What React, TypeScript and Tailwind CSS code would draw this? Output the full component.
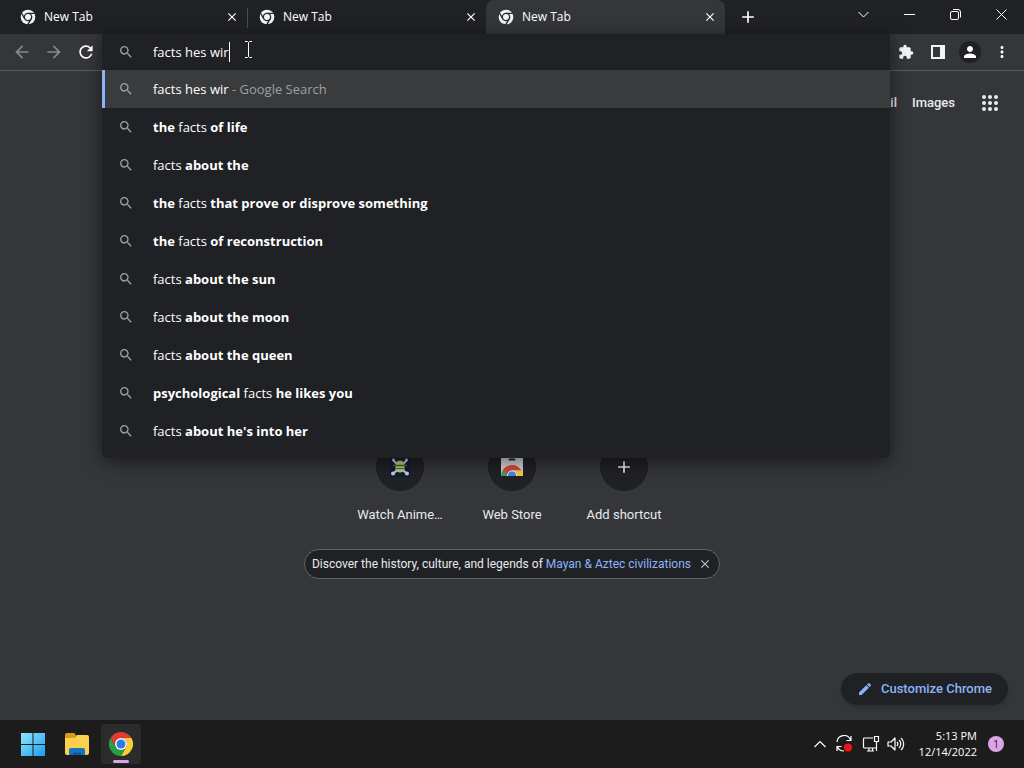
import React, { useState } from "react";
import { MdArrowBack, MdArrowForward, MdRefresh, MdSearch, MdExtension, MdPerson, MdMoreVert, MdClose, MdAdd, MdEdit } from "react-icons/md";

interface IPart {
  text: string;
  bold?: boolean;
}

const tabs = [
  { id: 1, title: "New Tab" },
  { id: 2, title: "New Tab" },
  { id: 3, title: "New Tab" },
];

const suggestions: IPart[][] = [
  [{ text: "the", bold: true }, { text: " facts " }, { text: "of life", bold: true }],
  [{ text: "facts " }, { text: "about the", bold: true }],
  [{ text: "the", bold: true }, { text: " facts " }, { text: "that prove or disprove something", bold: true }],
  [{ text: "the", bold: true }, { text: " facts " }, { text: "of reconstruction", bold: true }],
  [{ text: "facts " }, { text: "about the sun", bold: true }],
  [{ text: "facts " }, { text: "about the moon", bold: true }],
  [{ text: "facts " }, { text: "about the queen", bold: true }],
  [{ text: "psychological", bold: true }, { text: " facts " }, { text: "he likes you", bold: true }],
  [{ text: "facts " }, { text: "about he's into her", bold: true }],
];

const ChromeMono = () => (
  <svg viewBox="0 0 48 48" className="h-4 w-4 shrink-0">
    <circle cx="24" cy="24" r="22" fill="#f1f3f4" />
    <g stroke="#2a2b2e" strokeWidth="4" fill="none">
      <circle cx="24" cy="24" r="11" />
      <path d="M24 13H46M33.5 29.5 22.5 48.5M14.5 29.5 3.5 10.5" />
    </g>
  </svg>
);

const ChromeColor = () => (
  <svg viewBox="0 0 48 48" className="h-6 w-6">
    <path d="M3.2 12A24 24 0 0 1 44.8 12H24A12 12 0 0 0 13.6 30Z" fill="#e33b2e" />
    <path d="M44.8 12A24 24 0 0 1 24 48L34.4 30A12 12 0 0 0 24 12Z" fill="#fccc32" />
    <path d="M24 48A24 24 0 0 1 3.2 12L13.6 30A12 12 0 0 0 34.4 30Z" fill="#2a9d48" />
    <circle cx="24" cy="24" r="12" fill="#fff" />
    <circle cx="24" cy="24" r="9" fill="#2f78e6" />
  </svg>
);

const SkullIcon = () => (
  <svg viewBox="0 0 20 20" className="h-5 w-5">
    <rect width="20" height="20" fill="#141c33" />
    <path d="M4 4 16 16M16 4 4 16" stroke="#c3cbea" strokeWidth="2" />
    <g fill="#c3cbea">
      <circle cx="3.500" cy="3" r="1.500" />
      <circle cx="16.500" cy="3" r="1.500" />
      <circle cx="3" cy="16.500" r="2" />
      <circle cx="17" cy="16.500" r="2" />
    </g>
    <path d="M5.500 8a4.500 4.500 0 0 1 9 0v3.500a4.500 4 0 0 1-9 0Z" fill="#b5c872" />
    <path d="M3 8.500h14" stroke="#4a5a3a" strokeWidth="1.500" />
    <path d="M6.500 11.500h7" stroke="#4a5a3a" />
  </svg>
);

const WebStoreIcon = () => (
  <svg viewBox="0 0 24 24" className="h-6 w-6">
    <defs>
      <clipPath id="bag">
        <path d="M1 2h22v19H1Z" />
      </clipPath>
    </defs>
    <path d="M1 2h22v19H1Z" fill="#d0d2d3" />
    <path d="M9.500 4.500h5" stroke="#202124" strokeWidth="2" strokeLinecap="round" />
    <g clipPath="url(#bag)">
      <path d="M12 21 2.500 15.500A11 11 0 0 0 1 21l3 1h8Z" fill="#34a163" />
      <path d="M2.500 15.500a11 11 0 0 1 19 0H12L7 19Z" fill="#d9453c" />
      <path d="M12 15.500h9.500a11 11 0 0 1 1.500 6.500H12Z" fill="#fbc93d" />
      <circle cx="12" cy="20.500" r="5" fill="#e8eaed" />
      <circle cx="12" cy="20.500" r="4" fill="#4285f4" />
    </g>
  </svg>
);

const WindowsIcon = () => (
  <svg viewBox="0 0 24 24" className="h-6 w-6">
    <defs>
      <linearGradient id="win" x1="0" y1="0" x2="1" y2="1">
        <stop offset="0" stopColor="#8fe6fb" />
        <stop offset="1" stopColor="#1d9df0" />
      </linearGradient>
    </defs>
    <path d="M0 1h11.500v11H0ZM12.500 1H24v11H12.500ZM0 13h11.500v11H0ZM12.500 13H24v11H12.500Z" fill="url(#win)" />
  </svg>
);

const FolderIcon = () => (
  <svg viewBox="0 0 26 24" className="h-6 w-[26px]">
    <path d="M1 3a2 2 0 0 1 2-2h7l2 2-2 4H1Z" fill="#d99b1c" />
    <path d="M1 6h9l3-3h10a2 2 0 0 1 2 2v16a2 2 0 0 1-2 2H3a2 2 0 0 1-2-2Z" fill="#fbd04e" />
    <path d="M5 23v-5a2 2 0 0 1 2-2h12a2 2 0 0 1 2 2v5Z" fill="#1673c4" />
    <path d="M9 23v-2.500h8V23Z" fill="#0e559c" />
  </svg>
);

const AppsIcon = () => (
  <svg viewBox="0 0 16 16" className="h-4 w-4" fill="#e8eaed">
    {[2, 8, 14].map((y) => [2, 8, 14].map((x) => <circle key={`${x}-${y}`} cx={x} cy={y} r="2" />))}
  </svg>
);

const WindowControls = () => {
  const controls = [
    { label: "Search tabs", d: "M0.500 3 5.500 8 10.500 3" },
    { label: "Minimize", d: "M0 5.500H11" },
    { label: "Restore", d: "M0.500 4a1.500 1.500 0 0 1 1.500-1.500H7A1.500 1.500 0 0 1 8.500 4V9A1.500 1.500 0 0 1 7 10.500H2A1.500 1.500 0 0 1 0.500 9ZM3 0.500H8A2.500 2.500 0 0 1 10.500 3V8.500" },
    { label: "Close", d: "M0.500 0.500 10.500 10.500M10.500 0.500 0.500 10.500" },
  ];
  return (
    <div className="ml-auto flex h-7">
      {controls.map((control) => (
        <button key={control.label} aria-label={control.label} className="flex w-[46px] items-center justify-center">
          <svg viewBox="0 0 11 11" className="h-[11px] w-[11px]" fill="none" stroke="#fff">
            <path d={control.d} />
          </svg>
        </button>
      ))}
    </div>
  );
};

const TabStrip = () => (
  <div className="flex h-[34px] pl-2">
    {tabs.map((tab, index) => {
      const active = index === tabs.length - 1;
      return (
        <div
          key={tab.id}
          className={`flex w-[239px] items-center pr-[7px] pl-3 ${active ? "rounded-t-lg bg-[#35363a]" : ""} ${index === 1 ? "bg-[linear-gradient(#4a4c50,#4a4c50)] bg-[length:1px_20px] bg-[position:0_8px] bg-no-repeat" : ""}`}
        >
          <ChromeMono />
          <span className="ml-2 flex-1 text-[12px]">{tab.title}</span>
          <button aria-label="Close tab" className="flex h-4 w-4 items-center justify-center">
            <MdClose className="h-[14px] w-[14px]" />
          </button>
        </div>
      );
    })}
    <button aria-label="New tab" className="ml-[9px] flex w-7 items-center justify-center">
      <MdAdd className="h-5 w-5" />
    </button>
    <WindowControls />
  </div>
);

const Omnibox = () => {
  const [query, setQuery] = useState("facts hes wir");
  return (
    <div className="relative flex-1 text-[13px]">
      <div className="absolute inset-x-0 top-0 z-10 rounded-b-md bg-[#202124] pb-2 shadow-[0_4px_18px_rgba(0,0,0,0.5)]">
        <div className="flex h-9 items-center px-4">
          <MdSearch className="h-4 w-4 text-[#9aa0a6]" />
          <input
            aria-label="Search Google or type a URL"
            className="ml-[19px] field-sizing-content bg-transparent pt-px outline-none"
            value={query}
            onChange={(e) => setQuery(e.target.value)}
          />
          <span className="h-5 w-px bg-white" />
          <svg viewBox="0 0 7 17" className="mb-[6px] ml-[15px] h-[17px] w-[7px]" fill="none" stroke="#fff">
            <path d="M0 0.500H2.500L3.500 1.500 4.500 0.500H7M3.500 1.500V15.500M0 16.500H2.500L3.500 15.500 4.500 16.500H7" />
          </svg>
        </div>
        <ul>
          <li className="flex h-[38px] items-center border-l-3 border-[#8ab4f8] bg-[#3a3b3d] pl-[13px]">
            <MdSearch className="h-4 w-4 text-[#9aa0a6]" />
            <span className="ml-[19px] pt-0.5">
              facts hes wir<span className="text-[#9aa0a6]"> - Google Search</span>
            </span>
          </li>
          {suggestions.map((parts, index) => (
            <li key={index} className="flex h-[38px] items-center pl-4">
              <MdSearch className="h-4 w-4 text-[#9aa0a6]" />
              <span className="ml-[19px] pt-0.5 whitespace-pre">
                {parts.map((part) => (
                  <span key={part.text} className={part.bold ? "font-bold" : ""}>
                    {part.text}
                  </span>
                ))}
              </span>
            </li>
          ))}
        </ul>
      </div>
    </div>
  );
};

const Toolbar = () => (
  <div className="flex h-[37px] border-b border-[#5c5d60] bg-[#35363a] px-[6px]">
    <button aria-label="Back" className="flex w-8 items-center justify-center text-[#86888b]">
      <MdArrowBack className="h-5 w-5" />
    </button>
    <button aria-label="Forward" className="flex w-8 items-center justify-center text-[#86888b]">
      <MdArrowForward className="h-5 w-5" />
    </button>
    <button aria-label="Reload" className="flex w-8 items-center justify-center">
      <MdRefresh className="h-5 w-5" />
    </button>
    <Omnibox />
    <button aria-label="Extensions" className="flex w-8 items-center justify-center text-[#f1f3f4]">
      <MdExtension className="h-4 w-4" />
    </button>
    <button aria-label="Side panel" className="flex w-8 items-center justify-center">
      <svg viewBox="0 0 14 14" className="h-[14px] w-[14px]">
        <path d="M0 0h14v14H0ZM2 2v10h7V2Z" fill="#f1f3f4" fillRule="evenodd" />
      </svg>
    </button>
    <button aria-label="Profile" className="flex w-8 items-center justify-center">
      <span className="flex h-[22px] w-[22px] items-center justify-center rounded-full bg-[#202124]">
        <MdPerson className="h-[18px] w-[18px]" />
      </span>
    </button>
    <button aria-label="Menu" className="flex w-8 items-center justify-center">
      <MdMoreVert className="h-[18px] w-[18px]" />
    </button>
  </div>
);

const shortcuts = [
  { label: "Watch Anime…", icon: <SkullIcon /> },
  { label: "Web Store", icon: <WebStoreIcon /> },
  { label: "Add shortcut", icon: <MdAdd className="h-5 w-5" /> },
];

const NewTabPage = () => (
  <main className="flex flex-1 flex-col items-center bg-[#35363a] font-['Roboto',sans-serif] text-[#e8eaed]">
    <nav className="flex h-16 items-center gap-[15px] self-end pr-[26px] text-[13px] font-medium">
      <a href="#gmail">Gmail</a>
      <a href="#images">Images</a>
      <button aria-label="Google apps" className="ml-3">
        <AppsIcon />
      </button>
    </nav>
    <div className="mt-[308px] flex">
      {shortcuts.map((shortcut) => (
        <a key={shortcut.label} href="#shortcut" className="flex w-28 flex-col items-center gap-4 text-[13px] leading-4">
          <span className="flex h-12 w-12 items-center justify-center rounded-full bg-[#202124]">{shortcut.icon}</span>
          {shortcut.label}
        </a>
      ))}
    </div>
    <div className="mt-[26px] flex h-[30px] items-center rounded-full border border-[#5f6368] bg-[#202124] px-[7px] text-[12px]">
      <p>
        Discover the history, culture, and legends of{" "}
        <a href="#doodle" className="text-[#8ab4f8]">
          Mayan &amp; Aztec civilizations
        </a>
      </p>
      <button aria-label="Dismiss" className="ml-[7px]">
        <MdClose className="h-[14px] w-[14px] text-[#bdc1c6]" />
      </button>
    </div>
    <button className="mt-auto mr-4 mb-[15px] flex h-8 items-center gap-2 self-end rounded-full bg-[#202124] px-4 text-[13px] font-medium text-[#8ab4f8] shadow-md">
      <MdEdit className="h-4 w-4" />
      Customize Chrome
    </button>
  </main>
);

const Taskbar = () => (
  <footer className="flex h-12 items-center bg-[#1c1c1c] pr-5 pl-[13px]">
    <button aria-label="Start" className="flex h-10 w-10 items-center justify-center">
      <WindowsIcon />
    </button>
    <button aria-label="File Explorer" className="ml-1 flex h-10 w-10 items-center justify-center">
      <FolderIcon />
    </button>
    <button aria-label="Google Chrome" className="relative ml-1 flex h-10 w-10 items-center justify-center rounded bg-[#2c2c2c]">
      <ChromeColor />
      <span className="absolute bottom-px h-[3px] w-4 rounded-full bg-[#d9a5e3]" />
    </button>
    <div className="ml-auto flex items-center">
      <svg viewBox="0 0 12 8" className="h-2 w-3" fill="none" stroke="#fff" strokeWidth="1.200">
        <path d="M0.500 7 6 1.500 11.500 7" />
      </svg>
      <svg viewBox="0 0 18 18" className="ml-[9px] h-[18px] w-[18px]" fill="none" stroke="#fff" strokeWidth="1.200">
        <path d="M2 7A7 7 0 0 1 15.500 5M16 1V5.500H11.500M6.500 11.500H2V16M2.500 12A7 7 0 0 0 9 16" />
        <circle cx="13" cy="12.500" r="4" fill="#f01414" stroke="none" />
      </svg>
      <svg viewBox="0 0 18 18" className="ml-[9px] h-[18px] w-[18px]" fill="none" stroke="#fff" strokeWidth="1.200">
        <path d="M11 3H2.500A1 1 0 0 0 1.500 4V12A1 1 0 0 0 2.500 13H14M5 16H12M7 13V16M10.500 13V16M12.500 1.500H16.500V6.500H12.500ZM14.500 6.500V16" />
      </svg>
      <svg viewBox="0 0 18 18" className="ml-[7px] h-[18px] w-[18px]" fill="none" stroke="#fff" strokeWidth="1.200" strokeLinejoin="round">
        <path d="M1 7H4L8 3V15L4 11H1ZM10 7A3 3 0 0 1 10 11M12 5A5.500 5.500 0 0 1 12 13M14 3A8 8 0 0 1 14 15" />
      </svg>
      <div className="ml-[14px] text-right text-[11px] leading-4">
        <p>5:13 PM</p>
        <p>12/14/2022</p>
      </div>
      <span className="ml-[11px] flex h-4 w-4 items-center justify-center rounded-full bg-[#d9a5e3] text-[10px] text-[#202124]">1</span>
    </div>
  </footer>
);

const App = () => {
  return (
    <div className="flex h-screen flex-col bg-[#202124] font-['Open_Sans','Noto_Sans',sans-serif] text-white">
      <TabStrip />
      <Toolbar />
      <NewTabPage />
      <Taskbar />
    </div>
  );
};

export default App;
